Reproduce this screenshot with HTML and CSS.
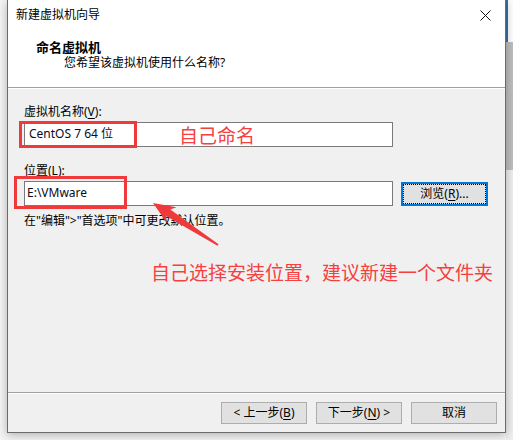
FILE: index.html
```html
<!DOCTYPE html>
<html lang="zh">
<head>
<meta charset="utf-8">
<title>新建虚拟机向导</title>
<link rel="stylesheet" href="styles.css">
</head>
<body>
<div class="screen">
  <div class="window">
    <div class="titlebar">
      <span class="title">新建虚拟机向导</span>
      <span class="close">
        <svg width="11" height="11" viewBox="0 0 11 11"><path d="M0.5 0.5L10.5 10.5M10.5 0.5L0.5 10.5" stroke="#111" stroke-width="1" fill="none"/></svg>
      </span>
    </div>
    <div class="header">
      <div class="h-title">命名虚拟机</div>
      <div class="h-sub">您希望该虚拟机使用什么名称?</div>
    </div>
    <div class="content">
      <div class="label label-name">虚拟机名称(<u>V</u>):</div>
      <div class="row row-name">
        <div class="input">CentOS 7 64 位</div>
      </div>
      <div class="label label-loc">位置(<u>L</u>):</div>
      <div class="row row-loc">
        <div class="input input-loc">E:\VMware</div>
        <div class="btn browse">浏览(<u>R</u>)...</div>
      </div>
      <div class="hint">在"编辑"&gt;"首选项"中可更改默认位置。</div>
    </div>
    <div class="footer">
      <div class="btn">&lt; 上一步(<u>B</u>)</div>
      <div class="btn">下一步(<u>N</u>) &gt;</div>
      <div class="btn">取消</div>
    </div>

    <div class="mark mark-name"></div>
    <div class="mark mark-loc"></div>
    <div class="note note-name">自己命名</div>
    <div class="note note-loc">自己选择安装位置，建议新建一个文件夹</div>
    <svg class="arrow" width="497" height="432" viewBox="0 0 497 432">
      <polygon points="145,203 168.4,207.3 162.3,209.6 210.5,244.2 209.5,245.8 158,216.1 158.6,222.5" fill="#f0393a"/>
    </svg>
  </div>
  <div class="side">
    <div class="side-top"></div>
    <div class="side-mid"></div>
    <div class="side-low"></div>
  </div>
</div>
</body>
</html>
```

FILE: styles.css
```css
* { box-sizing: border-box; }
html, body { margin: 0; padding: 0; }
body {
  width: 513px;
  height: 440px;
  overflow: hidden;
  font-family: "Noto Sans", "Noto Sans CJK SC", sans-serif;
  font-size: 12px;
  color: #000;
  background: #f4f4f4;
}
.screen {
  display: flex;
  align-items: flex-start;
  width: 513px;
  height: 440px;
  padding-left: 7px;
}
.window {
  position: relative;
  width: 499px;
  height: 433px;
  background: #f0f0f0;
  border: 1px solid #6b6b6b;
  border-top: 0;
  display: flex;
  flex-direction: column;
  box-shadow: 0 2px 9px rgba(0,0,0,0.28);
  z-index: 1;
}
.titlebar {
  height: 30px;
  background: #fff;
  display: flex;
  align-items: center;
  justify-content: space-between;
  padding-left: 8px;
}
.title { line-height: 16px; }
.close {
  width: 46px;
  height: 30px;
  display: flex;
  align-items: center;
  justify-content: center;
  margin-right: -3px;
}
.header {
  height: 58px;
  background: #fff;
  border-bottom: 1px solid #a0a0a0;
  padding: 9px 0 0 28px;
}
.h-title {
  font-weight: bold;
  font-size: 13px;
  line-height: 16px;
}
.h-sub {
  line-height: 16px;
  padding-left: 28px;
}
.content {
  flex: 1;
  border-top: 1px solid #fff;
  padding: 15px 0 0 16px;
}
.label { line-height: 16px; }
.row { display: flex; align-items: flex-start; }
.row-name { margin-top: 2px; }
.label-loc { margin-top: 16px; }
.row-loc { margin-top: 2px; }
.input {
  width: 369px;
  height: 25px;
  background: #fff;
  border: 1px solid #7a7a7a;
  line-height: 22px;
  padding-left: 4px;
  color: #0b0b1e;
}
.input-loc { padding-left: 2px; }
.btn {
  width: 86px;
  height: 22px;
  background: #e1e1e1;
  border: 1px solid #adadad;
  display: flex;
  align-items: center;
  justify-content: center;
  line-height: 16px;
}
.browse {
  position: relative;
  width: 87px;
  height: 24px;
  margin-left: 8px;
  margin-top: 1px;
  border: 2px solid #0078d7;
}
.browse::after {
  content: "";
  position: absolute;
  inset: 0;
  border: 1px dotted #000;
}
.hint {
  margin-top: 7px;
  line-height: 16px;
}
u { text-underline-offset: 2px; }
.footer {
  height: 40px;
  border-top: 1px solid #a0a0a0;
  box-shadow: inset 0 1px 0 #fff;
  display: flex;
  justify-content: flex-end;
  gap: 9px;
  padding: 9px 8px 0 0;
}
.mark {
  position: absolute;
  border: 3px solid #f0393a;
}
.mark-name { left: 11px; top: 121px; width: 118px; height: 27px; }
.mark-loc { left: 6px; top: 176px; width: 113px; height: 33px; }
.note {
  position: absolute;
  color: #f5403f;
  font-family: "Noto Sans CJK SC", sans-serif;
  font-size: 19px;
  line-height: 19px;
  white-space: nowrap;
}
.note-name { left: 171px; top: 125px; }
.note-loc { left: 143px; top: 262px; }
.arrow {
  position: absolute;
  left: 0;
  top: 0;
  pointer-events: none;
}
.side {
  width: 7px;
  height: 440px;
  display: flex;
  flex-direction: column;
}
.side-top { height: 42px; background: #fdfdfd; border-left: 2px solid #3a6ea5; }
.side-mid { height: 128px; background: #bdbdbd; }
.side-low { flex: 1; background: #eeeeee; }
```
